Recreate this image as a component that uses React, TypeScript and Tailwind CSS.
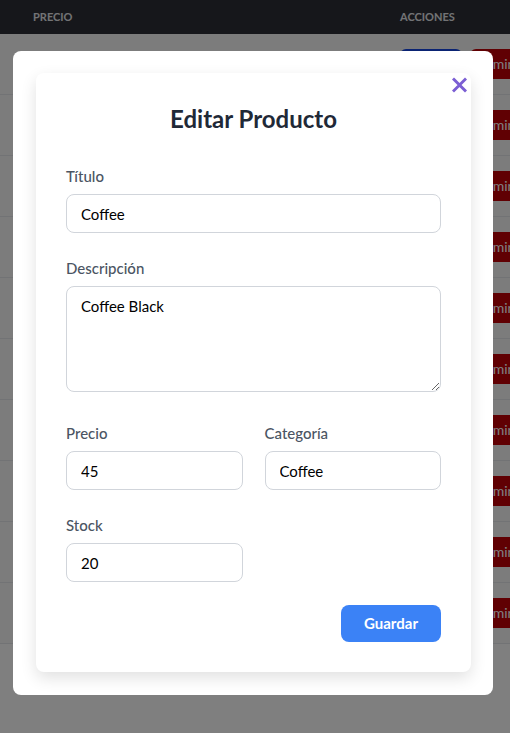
import React from "react";

const rows = Array.from({ length: 10 }, (_, i) => i);

function Field({ label, value, className = "" }: { label: string; value: string; className?: string }) {
  return (
    <div className={className}>
      <label className="block text-[15px] leading-[20px] font-medium text-[#4b5563] mb-2">{label}</label>
      <input
        readOnly
        value={value}
        className="block w-full h-[39px] rounded-lg border border-[#d1d5db] bg-white px-[14px] text-[15px] text-black outline-none"
      />
    </div>
  );
}

export default function App() {
  return (
    <div className="relative min-h-screen overflow-hidden bg-white" style={{ fontFamily: 'Lato, "Noto Sans", sans-serif' }}>
      {/* Background table */}
      <div className="w-[560px]">
        <div className="flex h-[34px] items-center bg-[#2c2e36] text-[11px] font-bold uppercase text-gray-200">
          <div className="w-[400px] pl-[33px]">Precio</div>
          <div>Acciones</div>
        </div>
        {rows.map((r) => (
          <div key={r} className="flex h-[61px] items-start border-b border-gray-200 bg-[#f8f9f8] pt-[15px]">
            <div className="ml-[400px] flex shrink-0 gap-2">
              <button className="h-[30px] w-[62px] shrink-0 rounded-md bg-blue-700 text-sm text-white">Editar</button>
              <button className="h-[30px] w-[76px] shrink-0 rounded-md bg-red-700 pl-2 text-left text-sm text-white">Eliminar</button>
            </div>
          </div>
        ))}
      </div>

      {/* Overlay */}
      <div className="fixed inset-0 bg-black/50 pt-[51px] pl-[13px]">
        <div className="relative w-[480px] rounded-lg bg-white pt-[22px] pl-[23px] pr-[22px] pb-[23px]">
          <button className="absolute top-[26px] right-[26px] text-[#7b5ed3]">
            <svg width="15" height="16" viewBox="0 0 15 16" fill="none">
              <path d="M2 2.5 L13 13.5 M13 2.5 L2 13.5" stroke="currentColor" strokeWidth="3" strokeLinecap="square" />
            </svg>
          </button>
          <div className="rounded-lg bg-white px-[30px] pt-[30px] pb-[30px] shadow-[0_6px_16px_rgba(0,0,0,0.12)]">
            <h2 className="mb-[31px] text-center text-[24px] leading-8 font-bold text-[#1f2937]">Editar Producto</h2>
            <Field label="Título" value="Coffee" className="mb-[25px]" />
            <div className="mb-[31px]">
              <label className="block text-[15px] leading-[20px] font-medium text-[#4b5563] mb-2">Descripción</label>
              <textarea
                readOnly
                value="Coffee Black"
                className="block h-[106px] w-full rounded-lg border border-[#d1d5db] bg-white px-[14px] py-[8px] text-[15px] text-black outline-none"
              />
            </div>
            <div className="mb-[25px] grid grid-cols-2 gap-[22px]">
              <Field label="Precio" value="45" />
              <Field label="Categoría" value="Coffee" />
            </div>
            <div className="grid grid-cols-2 gap-[22px]">
              <Field label="Stock" value="20" />
            </div>
            <div className="mt-[23px] flex justify-end">
              <button className="h-[37px] w-[100px] rounded-lg bg-[#3b82f6] text-[15px] font-bold text-white">Guardar</button>
            </div>
          </div>
        </div>
      </div>
    </div>
  );
}
